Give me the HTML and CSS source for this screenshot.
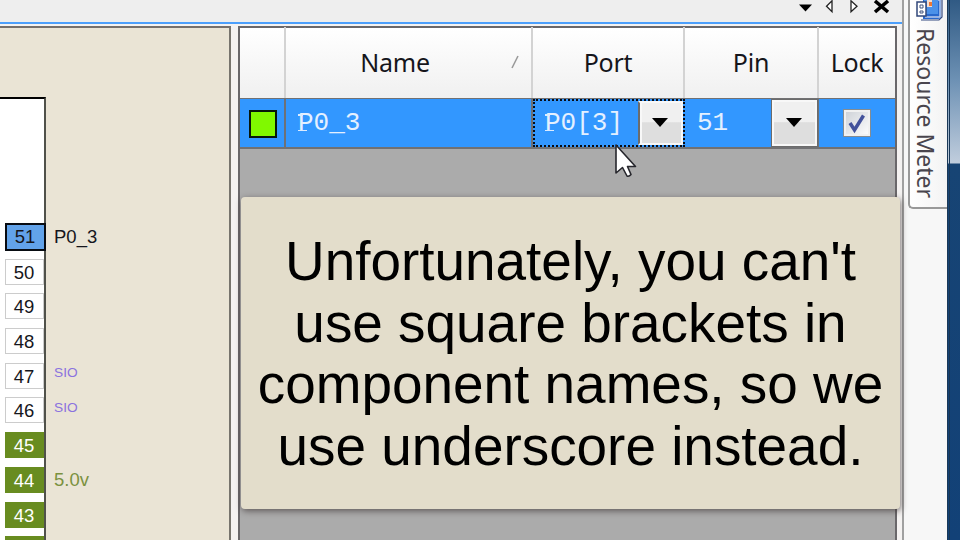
FILE: index.html
```html
<!DOCTYPE html>
<html lang="en">
<head>
<meta charset="utf-8">
<title>Pin editor</title>
<link rel="stylesheet" href="styles.css">
</head>
<body>
<div class="window">
  <main class="main">
    <header class="toolbar">
      <svg width="98" height="22" viewBox="0 0 98 22">
        <path d="M1 4.500H14L7.500 11.500Z" fill="#000"/>
        <path d="M34 .8V11.700L28.500 6.200Z" fill="#fff" stroke="#222" stroke-width="1.300"/>
        <path d="M53 .8V11.700L59 6.200Z" fill="#fff" stroke="#222" stroke-width="1.300"/>
        <path d="M77 1L90 12M90 1L77 12" stroke="#000" stroke-width="3.600"/>
      </svg>
    </header>
    <div class="panels">
      <section class="diagram">
        <div class="chip">
          <div class="pin selected"><b>51</b><span>P0_3</span></div>
          <div class="pin"><b>50</b></div>
          <div class="pin"><b>49</b></div>
          <div class="pin"><b>48</b></div>
          <div class="pin sio"><b>47</b><span>SIO</span></div>
          <div class="pin sio"><b>46</b><span>SIO</span></div>
          <div class="pin power"><b>45</b></div>
          <div class="pin power"><b>44</b><span>5.0v</span></div>
          <div class="pin power"><b>43</b></div>
          <div class="pin power"><b></b></div>
        </div>
      </section>
      <section class="table">
        <div class="head row">
          <div></div>
          <div>Name<svg class="sort" width="8" height="14" viewBox="0 0 8 14"><path d="M1 13L7 1" stroke="#999" stroke-width="1.500"/></svg></div>
          <div>Port</div>
          <div>Pin</div>
          <div>Lock</div>
        </div>
        <div class="data row">
          <div class="swatch-cell"><i class="swatch"></i></div>
          <div class="name"><span><span class="serif-p">P</span>0_3</span></div>
          <div class="port"><span><span class="serif-p">P</span>0[3]</span><button class="drop"><svg width="16" height="9" viewBox="0 0 16 9"><path d="M0 0H16L8 9Z"/></svg></button></div>
          <div class="pin-no"><span>51</span><button class="drop"><svg width="16" height="9" viewBox="0 0 16 9"><path d="M0 0H16L8 9Z"/></svg></button></div>
          <div class="lock"><i class="check"><svg width="24" height="24" viewBox="0 0 24 24"><path d="M5 12L9.500 19L18.500 4.500" fill="none" stroke="#43529b" stroke-width="3.500"/></svg></i></div>
        </div>
      </section>
    </div>
  </main>
  <aside class="side">
    <div class="tab">
      <svg class="tab-icon" width="28" height="21" viewBox="0 0 28 21">
        <path d="M8 0H26V16Q26 19 23 19H8Z" fill="#2868cc"/>
        <path d="M9 0H23V14H9Z" fill="#4b91e8"/>
        <path d="M23 0H25V17H10" fill="none" stroke="#b9c9ea" stroke-width="1.500"/>
        <path d="M27 0V17L24 20H6" fill="none" stroke="#344a80" stroke-width="1.200"/>
        <path d="M12 0H17V7H12Z" fill="#f3ded0"/><path d="M14 2H17V6H14Z" fill="#ef7834"/>
        <path d="M2 2H11V16H2Z" fill="#fff" stroke="#304779" stroke-width="1.500"/>
        <path d="M5 5H8V8H5ZM5 11H8V13H5Z" fill="#fff" stroke="#40557f" stroke-width="1"/>
      </svg>
      <span>Resource Meter</span>
    </div>
  </aside>
  <div class="desktop"></div>
</div>
<svg class="cursor" width="24" height="36" viewBox="0 0 24 36"><path d="M2 2V30L8.500 24.500L13 33Q15 34 17 31.500L13.500 23.500H21.500Z" fill="#fff" stroke="#26262c" stroke-width="1.600" stroke-linejoin="round"/></svg>
<div class="callout">
  <div>Unfortunately, you can't</div>
  <div>use square brackets in</div>
  <div>component names, so we</div>
  <div>use underscore instead.</div>
</div>
</body>
</html>
```
FILE: styles.css
```css
* { box-sizing: border-box; }
body { margin: 0; width: 960px; height: 540px; overflow: hidden; position: relative; font-family: "Liberation Sans", Arial, sans-serif; }
.window { display: flex; height: 540px; }
.main { width: 902px; display: flex; flex-direction: column; background: #f4f2f1; }
.toolbar { height: 24px; flex: none; background: #eee; border-bottom: 2px solid #4c9ffb; display: flex; justify-content: flex-end; padding-right: 6px; }
.panels { flex: 1; display: flex; gap: 7px; padding-top: 2px; }
.diagram { width: 231px; height: 514px; overflow: hidden; background: #eae4d5; border-top: 2px solid #746f6c; border-right: 2px solid #77746d; }
.chip { width: 46px; height: 460px; margin-top: 69px; padding: 125px 0 0 5px; background: #fff; border-top: 2px solid #000; border-right: 2px solid #50514a; }
.pin { display: flex; align-items: center; height: 26px; width: 130px; margin-bottom: 8.7px; font-size: 18.5px; color: #16161c; }
.pin b { font-weight: 400; width: 39px; height: 26px; line-height: 25px; padding-right: 1px; text-align: center; border: 1px solid #ccc; background: #fff; flex: none; }
.pin span { margin-left: 10px; line-height: 26px; }
.selected b { height: 28px; width: 41px; border: 2px solid #080c12; background: #62a3ea; line-height: 24px; }
.selected span { margin-left: 8px; }
.sio span { font-size: 13.7px; color: #8a72df; margin-top: -5px; }
.power b { background: #688c20; border-color: #688c20; color: #fff; }
.power span { color: #7b913f; }
.table { width: 659px; background: #ababab; border: solid #69676a; border-width: 2px 2px 0; }
.row { display: grid; grid-template-columns: 46px 247px 152px 134px 1fr; }
.head { height: 70px; background: linear-gradient(#fff, #f0f0f0); font: 25px/70px "Noto Sans", "Open Sans", sans-serif; letter-spacing: -.25px; text-align: center; color: #15151b; }
.head > div { border-right: 2px solid #d3d3d3; position: relative; margin-top: -1px; }
.head > div:nth-child(2) { padding-right: 27px; }
.head > div:last-child { border: 0; }
.sort { position: absolute; right: 12px; top: 28px; }
.data { grid-template-rows: 48px; height: 51px; background: #3297ff; border: solid #717173; border-width: 1px 0 2px; font: 26px/48px "Liberation Mono", monospace; color: #e4f0ff; }
.data > div { border-right: 2px solid #6d7177; display: flex; align-items: center; min-width: 0; }
.data > div:last-child { border: 0; }
.swatch-cell { justify-content: center; padding-left: 1px; }
.swatch { width: 28px; height: 28px; border: 2px solid #07170b; background: #80f900; margin-top: 1px; }
.name { padding-left: 12px; }
.serif-p { position: relative; }
.serif-p::before, .serif-p::after { content: ""; position: absolute; left: 0; bottom: 7px; width: 9px; height: 1.5px; background: #dcebff; }
.serif-p::after { bottom: auto; top: 6px; width: 5px; }
.data .port { border: 2px dotted #080c14; padding-left: 10px; justify-content: space-between; }
.pin-no { padding-left: 12px; justify-content: space-between; }
.drop { width: 45px; height: 46px; flex: none; padding: 0 0 0 1px; display: grid; place-items: center; border: 2px solid #f8f8f8; outline: 1px solid #6c6c6c; outline-offset: 0; background: linear-gradient(#f0f0f0 0 48%, #dedede 49% 100%); }
.drop svg { margin-right: 3px; margin-top: -1px; }
.port .drop { height: 44px; outline: 0; border-left: 2px solid #6c6c6c; box-shadow: inset 2px 0 #f8f8f8; }
.lock { justify-content: center; }
.check { width: 28px; height: 28px; display: grid; place-items: center; background: linear-gradient(135deg, #cbcfd5, #fff); border: 1px solid #858c91; box-shadow: inset 0 0 0 2px #f1f1f1; }
.side { width: 45px; background: #f7f7f7; border-left: 2px solid #a0a0a0; padding-left: 4px; }
.tab { height: 209px; background: linear-gradient(90deg, #fff, #f3f3f3); border: solid #999; border-width: 0 0 2px 2px; border-radius: 0 0 0 5px; display: flex; flex-direction: column; padding-left: 2px; }
.tab-icon { flex: none; margin-left: 3px; }
.tab span { writing-mode: vertical-rl; font: 23px/28px "Noto Sans", "Open Sans", sans-serif; letter-spacing: 0; padding-top: 7px; color: #49454d; white-space: nowrap; align-self: flex-start; }
.desktop { width: 13px; border-left: 3px double #193756; background: linear-gradient(#305a84, #6d91b4 80px, #c0cddd 163px, #174474 164px, #124177); }
.cursor { position: absolute; left: 614px; top: 143px; }
.callout { position: absolute; left: 241px; top: 197px; width: 659px; height: 312px; padding: 34px 0 0; border-radius: 4px; background: #e3ddcb; box-shadow: 1px 2px 6px rgba(45,35,35,.6); text-align: center; font-size: 54.9px; line-height: 61.5px; color: #000; white-space: nowrap; }
```
